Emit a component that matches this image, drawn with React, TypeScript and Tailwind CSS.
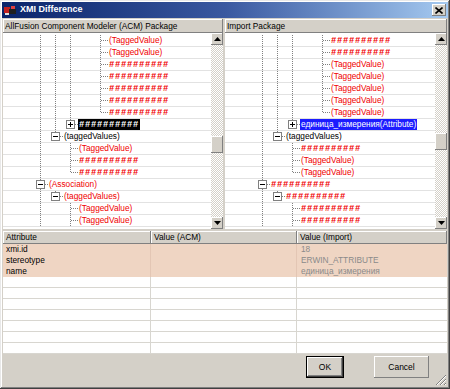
import React from 'react';

type Row = { cells: string; text: string; kind: 'tv' | 'hash' | 'black' | 'selBlack' | 'selBlue' };

const H = '##########';

const leftRows: Row[] = [
  { cells: '||| t', text: '(TaggedValue)', kind: 'tv' },
  { cells: '||| t', text: '(TaggedValue)', kind: 'tv' },
  { cells: '||| t', text: H, kind: 'hash' },
  { cells: '||| t', text: H, kind: 'hash' },
  { cells: '||| t', text: H, kind: 'hash' },
  { cells: '||| t', text: H, kind: 'hash' },
  { cells: '||| L', text: H, kind: 'hash' },
  { cells: '||+', text: H, kind: 'selBlack' },
  { cells: '|-', text: '(taggedValues)', kind: 'black' },
  { cells: '| t', text: '(TaggedValue)', kind: 'tv' },
  { cells: '| t', text: H, kind: 'hash' },
  { cells: '| L', text: H, kind: 'hash' },
  { cells: 'M', text: '(Association)', kind: 'tv' },
  { cells: '|-', text: '(taggedValues)', kind: 'tv' },
  { cells: '| t', text: '(TaggedValue)', kind: 'tv' },
  { cells: '| t', text: '(TaggedValue)', kind: 'tv' },
];

const rightRows: Row[] = [
  { cells: '||| t', text: H, kind: 'hash' },
  { cells: '||| t', text: H, kind: 'hash' },
  { cells: '||| t', text: '(TaggedValue)', kind: 'tv' },
  { cells: '||| t', text: '(TaggedValue)', kind: 'tv' },
  { cells: '||| t', text: '(TaggedValue)', kind: 'tv' },
  { cells: '||| t', text: '(TaggedValue)', kind: 'tv' },
  { cells: '||| L', text: '(TaggedValue)', kind: 'tv' },
  { cells: '||+', text: 'единица_измерения(Attribute)', kind: 'selBlue' },
  { cells: '|-', text: '(taggedValues)', kind: 'black' },
  { cells: '| t', text: H, kind: 'hash' },
  { cells: '| t', text: '(TaggedValue)', kind: 'tv' },
  { cells: '| L', text: '(TaggedValue)', kind: 'tv' },
  { cells: 'M', text: H, kind: 'hash' },
  { cells: '|-', text: H, kind: 'hash' },
  { cells: '| t', text: H, kind: 'hash' },
  { cells: '| t', text: H, kind: 'hash' },
];

const attrs = [
  { name: 'xmi.id', acm: '', imp: '18' },
  { name: 'stereotype', acm: '', imp: 'ERWIN_ATTRIBUTE' },
  { name: 'name', acm: '', imp: 'единица_измерения' },
];

const raised = 'bg-[#d4d0c8] shadow-[inset_-1px_-1px_#808080,inset_1px_1px_#ffffff]';

// one 15px indent cell of the tree: dotted guide lines and the +/- box
const Conn: React.FC<{ k: string }> = ({ k }) => {
  const c = '#808080';
  const box = k === '+' || k === '-' || k === 'M';
  return (
    <svg width="15" height="11" className="block shrink-0">
      {(k === '|' || k === 't' || k === 'M') && (
        <line x1="7.5" y1="0" x2="7.5" y2="11" stroke={c} strokeDasharray="1 1" />
      )}
      {(k === 'L' || k === '+' || k === '-') && (
        <line x1="7.5" y1="0" x2="7.5" y2="5" stroke={c} strokeDasharray="1 1" />
      )}
      {(k === 't' || k === 'L') && (
        <line x1="8" y1="5.5" x2="15" y2="5.5" stroke={c} strokeDasharray="1 1" />
      )}
      {box && (
        <>
          <line x1="12" y1="5.5" x2="15" y2="5.5" stroke={c} strokeDasharray="1 1" />
          <rect x="3.5" y="1.5" width="8" height="8" fill="#fff" stroke={c} />
          <line x1="5" y1="5.5" x2="10" y2="5.5" stroke="#000" />
          {k === '+' && <line x1="7.5" y1="3" x2="7.5" y2="8" stroke="#000" />}
        </>
      )}
    </svg>
  );
};

const textClass: Record<Row['kind'], string> = {
  tv: 'text-[#f00000]',
  hash: 'text-[#f00000] font-bold italic tracking-[1px] text-[9px]',
  black: 'text-black',
  selBlack: 'bg-black text-white font-bold italic tracking-[1px] text-[9px]',
  selBlue: 'bg-[#1c1cff] text-white',
};

const ScrollBtn: React.FC<{ down?: boolean }> = ({ down }) => (
  <div className={`h-[12px] w-full shrink-0 flex items-center justify-center ${raised}`}>
    <svg width="7" height="4">
      <path d={down ? 'M0 0h7L3.5 4z' : 'M0 4h7L3.5 0z'} fill="#000" />
    </svg>
  </div>
);

const Scrollbar: React.FC<{ top: number }> = ({ top }) => (
  <div className="w-[12px] shrink-0 flex flex-col bg-[repeating-conic-gradient(#d4d0c8_0_25%,#ffffff_0_50%)] bg-[length:2px_2px]">
    <ScrollBtn />
    <div style={{ height: top }} />
    <div className={`h-[17px] shrink-0 ${raised}`} />
    <div className="flex-1" />
    <ScrollBtn down />
  </div>
);

const TreePane: React.FC<{ title: string; rows: Row[]; thumb: number }> = ({ title, rows, thumb }) => (
  <div className="flex flex-col min-w-0">
    <div className={`h-[14px] pl-[2px] leading-[14px] text-black ${raised}`}>{title}</div>
    <div className="flex h-[196px] bg-white">
      <div className="flex-1 pt-[2px] overflow-hidden">
        {rows.map((r, i) => (
          <div key={i} className="h-[12px] flex items-start border-b border-[#e2e2e2] whitespace-nowrap">
            <div className="w-[30px] shrink-0" />
            {r.cells.split('').map((k, j) => (
              <Conn key={j} k={k} />
            ))}
            <span className={`px-[1px] leading-[11px] h-[11px] ${textClass[r.kind]}`}>{r.text}</span>
          </div>
        ))}
      </div>
      <Scrollbar top={thumb} />
    </div>
  </div>
);

export default function App() {
  return (
    <div className="w-[450px] h-[389px] bg-[#d4d0c8] p-[2px] flex flex-col text-[8.3px] font-['Liberation_Sans',Arial,sans-serif] shadow-[inset_-1px_-1px_#404040,inset_1px_1px_#e8e8e8,inset_-2px_-2px_#808080,inset_2px_2px_#ffffff] overflow-hidden">
      {/* title bar */}
      <div className="h-[16px] shrink-0 flex items-center bg-linear-to-r from-[#0a246a] via-[#3a58a0] to-[#a6caf0] px-[2px]">
        <svg width="13" height="11" className="shrink-0">
          <rect x="0" y="2" width="6" height="6" fill="#c02020" />
          <rect x="5" y="4" width="7" height="5" fill="#202020" />
          <rect x="7" y="1" width="4" height="3" fill="#e04040" />
          <rect x="1" y="8" width="4" height="2" fill="#e0e0e0" />
        </svg>
        <span className="ml-[3px] text-white font-bold text-[9px]">XMI Difference</span>
        <div className="flex-1" />
        <div className={`w-[14px] h-[12px] flex items-center justify-center ${raised} shadow-[inset_-1px_-1px_#404040,inset_1px_1px_#ffffff,inset_-2px_-2px_#808080]`}>
          <svg width="8" height="7">
            <path d="M0.5 0.5l7 6M7.5 0.5l-7 6" stroke="#000" strokeWidth="1.6" />
          </svg>
        </div>
      </div>

      <div className="flex-1 flex flex-col pt-[1px] px-[1px]">
        {/* tree panes */}
        <div className="grid grid-cols-[220px_1fr] gap-[2px]">
          <TreePane title="AllFusion Component Modeler (ACM) Package" rows={leftRows} thumb={91} />
          <TreePane title="Import Package" rows={rightRows} thumb={88} />
        </div>

        {/* attribute table */}
        <div className="mt-[2px] flex flex-col">
          <div className="grid grid-cols-[148px_146px_1fr] h-[13px]">
            {['Attribute', 'Value (ACM)', 'Value (Import)'].map((h) => (
              <div key={h} className={`pl-[3px] leading-[13px] text-black ${raised}`}>
                {h}
              </div>
            ))}
          </div>
          <div className="bg-white">
            {attrs.map((a) => (
              <div key={a.name} className="grid grid-cols-[148px_146px_1fr] h-[11px] leading-[11px] bg-[#efd5c3]">
                <div className="pl-[3px] border-r border-[#e3c6b4] text-black">{a.name}</div>
                <div className="pl-[3px] border-r border-[#e3c6b4]">{a.acm}</div>
                <div className="pl-[4px] text-[#8a8a8a]">{a.imp}</div>
              </div>
            ))}
            {Array.from({ length: 7 }).map((_, i) => (
              <div key={i} className="grid grid-cols-[148px_146px_1fr] h-[11px] border-b border-[#d8d6d0]">
                <div className="border-r border-[#d8d6d0]" />
                <div className="border-r border-[#d8d6d0]" />
                <div />
              </div>
            ))}
          </div>
        </div>

        {/* buttons */}
        <div className="flex-1 flex items-start pt-[2px]">
          <div className="flex-1" />
          <button className="w-[38px] h-[22px] border border-black bg-[#d4d0c8] shadow-[inset_-1px_-1px_#404040,inset_1px_1px_#ffffff,inset_-2px_-2px_#808080] text-black text-[8.5px]">
            OK
          </button>
          <button className={`ml-[30px] w-[55px] h-[22px] text-black text-[8.5px] ${raised} shadow-[inset_-1px_-1px_#404040,inset_1px_1px_#ffffff,inset_-2px_-2px_#808080]`}>
            Cancel
          </button>
          <svg width="12" height="12" className="self-end ml-[6px] mb-[1px]">
            <path d="M11 1L1 11M11 5L5 11M11 9L9 11" stroke="#808080" strokeWidth="1" />
            <path d="M11 2L2 11M11 6L6 11M11 10L10 11" stroke="#ffffff" strokeWidth="1" />
          </svg>
        </div>
      </div>
    </div>
  );
}
